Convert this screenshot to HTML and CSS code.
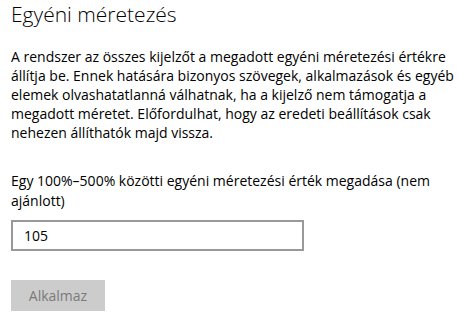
FILE: index.html
```html
<!DOCTYPE html>
<html lang="hu">
<head>
<meta charset="utf-8">
<link rel="stylesheet" href="styles.css">
</head>
<body>
<main class="page">
  <h1 class="title">Egyéni méretezés</h1>
  <p class="desc">A rendszer az összes kijelzőt a megadott egyéni méretezési értékre<br>állítja be. Ennek hatására bizonyos szövegek, alkalmazások és egyéb<br>elemek olvashatatlanná válhatnak, ha a kijelző nem támogatja a<br>megadott méretet. Előfordulhat, hogy az eredeti beállítások csak<br>nehezen állíthatók majd vissza.</p>
  <label class="field-label" for="scale">Egy 100%–500% közötti egyéni méretezési érték megadása (nem ajánlott)</label>
  <input class="field" id="scale" type="text" value="105">
  <button class="btn" type="button" disabled>Alkalmaz</button>
</main>
</body>
</html>
```
FILE: styles.css
```css
html, body {
  margin: 0;
  padding: 0;
  background: #ffffff;
}
.page {
  width: 444px;
  padding: 0 3px 0 11px;
  display: flex;
  flex-direction: column;
  align-items: flex-start;
  font-family: "Open Sans", "Noto Sans", sans-serif;
  color: #000;
}
.title {
  margin: 0;
  font-size: 21px;
  font-weight: 300;
  line-height: 28px;
}
.desc {
  margin: 19px 0 0 0;
  font-size: 14px;
  line-height: 19px;
  white-space: nowrap;
}
.field-label {
  margin-top: 29px;
  font-size: 14px;
  line-height: 20px;
}
.field {
  box-sizing: border-box;
  margin-top: 9px;
  width: 293px;
  height: 31px;
  border: 2px solid #999999;
  padding: 0 11px;
  font-family: inherit;
  font-size: 14px;
  color: #000;
  outline: none;
}
.btn {
  box-sizing: border-box;
  margin-top: 29px;
  width: 94px;
  height: 31px;
  border: none;
  background: #cccccc;
  color: #7a7a7a;
  font-family: inherit;
  font-size: 14px;
  padding: 0;
}
```
